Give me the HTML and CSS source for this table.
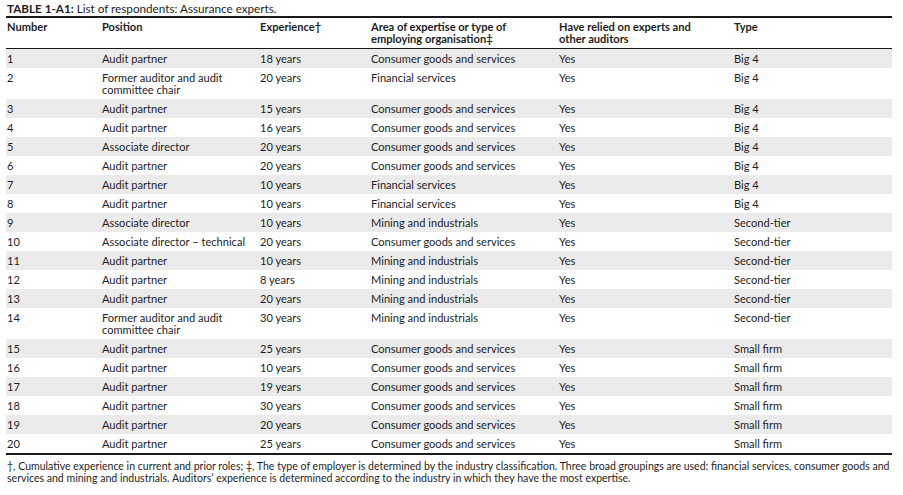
FILE: index.html
```html
<!DOCTYPE html>
<html>
<head>
<meta charset="utf-8">
<link rel="stylesheet" href="styles.css">
</head>
<body>
<div class="page">
  <p class="caption"><b>TABLE 1-A1:</b> List of respondents: Assurance experts.</p>
  <table class="tbl">
    <colgroup>
      <col class="c1"><col class="c2"><col class="c3"><col class="c4"><col class="c5"><col class="c6">
    </colgroup>
    <thead>
      <tr>
        <th>Number</th>
        <th>Position</th>
        <th>Experience†</th>
        <th>Area of expertise or type of<br>employing organisation‡</th>
        <th>Have relied on experts and<br>other auditors</th>
        <th>Type</th>
      </tr>
    </thead>
    <tbody>
      <tr><td>1</td><td>Audit partner</td><td>18 years</td><td>Consumer goods and services</td><td>Yes</td><td>Big 4</td></tr>
      <tr><td>2</td><td>Former auditor and audit<br>committee chair</td><td>20 years</td><td>Financial services</td><td>Yes</td><td>Big 4</td></tr>
      <tr><td>3</td><td>Audit partner</td><td>15 years</td><td>Consumer goods and services</td><td>Yes</td><td>Big 4</td></tr>
      <tr><td>4</td><td>Audit partner</td><td>16 years</td><td>Consumer goods and services</td><td>Yes</td><td>Big 4</td></tr>
      <tr><td>5</td><td>Associate director</td><td>20 years</td><td>Consumer goods and services</td><td>Yes</td><td>Big 4</td></tr>
      <tr><td>6</td><td>Audit partner</td><td>20 years</td><td>Consumer goods and services</td><td>Yes</td><td>Big 4</td></tr>
      <tr><td>7</td><td>Audit partner</td><td>10 years</td><td>Financial services</td><td>Yes</td><td>Big 4</td></tr>
      <tr><td>8</td><td>Audit partner</td><td>10 years</td><td>Financial services</td><td>Yes</td><td>Big 4</td></tr>
      <tr><td>9</td><td>Associate director</td><td>10 years</td><td>Mining and industrials</td><td>Yes</td><td>Second-tier</td></tr>
      <tr><td>10</td><td>Associate director – technical</td><td>20 years</td><td>Consumer goods and services</td><td>Yes</td><td>Second-tier</td></tr>
      <tr><td>11</td><td>Audit partner</td><td>10 years</td><td>Mining and industrials</td><td>Yes</td><td>Second-tier</td></tr>
      <tr><td>12</td><td>Audit partner</td><td>8 years</td><td>Mining and industrials</td><td>Yes</td><td>Second-tier</td></tr>
      <tr><td>13</td><td>Audit partner</td><td>20 years</td><td>Mining and industrials</td><td>Yes</td><td>Second-tier</td></tr>
      <tr><td>14</td><td>Former auditor and audit<br>committee chair</td><td>30 years</td><td>Mining and industrials</td><td>Yes</td><td>Second-tier</td></tr>
      <tr><td>15</td><td>Audit partner</td><td>25 years</td><td>Consumer goods and services</td><td>Yes</td><td>Small firm</td></tr>
      <tr><td>16</td><td>Audit partner</td><td>10 years</td><td>Consumer goods and services</td><td>Yes</td><td>Small firm</td></tr>
      <tr><td>17</td><td>Audit partner</td><td>19 years</td><td>Consumer goods and services</td><td>Yes</td><td>Small firm</td></tr>
      <tr><td>18</td><td>Audit partner</td><td>30 years</td><td>Consumer goods and services</td><td>Yes</td><td>Small firm</td></tr>
      <tr><td>19</td><td>Audit partner</td><td>20 years</td><td>Consumer goods and services</td><td>Yes</td><td>Small firm</td></tr>
      <tr><td>20</td><td>Audit partner</td><td>25 years</td><td>Consumer goods and services</td><td>Yes</td><td>Small firm</td></tr>
    </tbody>
  </table>
  <p class="note">†, Cumulative experience in current and prior roles; ‡, The type of employer is determined by the industry classification. Three broad groupings are used: financial services, consumer goods and<br>services and mining and industrials. Auditors’ experience is determined according to the industry in which they have the most expertise.</p>
</div>
</body>
</html>
```

FILE: styles.css
```css
html, body {
  margin: 0;
  padding: 0;
  background: #ffffff;
}
body {
  font-family: "Lato", "Liberation Sans", sans-serif;
  color: #1e1e1e;
}
.page {
  padding: 2px 11px 0 6px;
}
.caption {
  margin: 0 0 0 1px;
  font-size: 11.7px;
  line-height: 13px;
  height: 14px;
  white-space: nowrap;
}
.caption b {
  font-weight: 700;
}
.tbl {
  width: 886px;
  border-collapse: collapse;
  table-layout: fixed;
  font-size: 11.1px;
  line-height: 12px;
}
.c1 { width: 95px; }
.c2 { width: 158px; }
.c3 { width: 111px; }
.c4 { width: 188px; }
.c5 { width: 175px; }
.c6 { width: 159px; }
.tbl thead tr {
  border-top: 2px solid #1a1a1a;
  border-bottom: 1px solid #1a1a1a;
}
.tbl th {
  text-align: left;
  vertical-align: top;
  font-weight: 700;
  padding: 3px 2px 3px 1px;
  white-space: nowrap;
}
.tbl td {
  vertical-align: top;
  padding: 4px 2px 3px 1px;
  white-space: nowrap;
}
.tbl tbody tr:nth-child(odd) {
  background: #ebebeb;
}
.tbl tbody tr:last-child {
  border-bottom: 2px solid #1a1a1a;
}
.note {
  margin: 5px 0 0 1px;
  font-size: 10.55px;
  line-height: 12px;
  white-space: nowrap;
}
```
